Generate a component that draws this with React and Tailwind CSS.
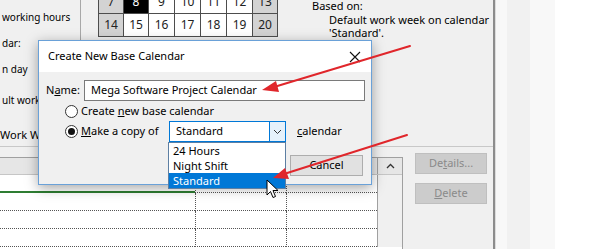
import React from 'react';

const rows = [
  [7, 8, 9, 10, 11, 12, 13],
  [14, 15, 16, 17, 18, 19, 20],
];

const cellClass = (n, i) => {
  if (n === 8) return 'bg-black text-white';
  if (i === 0 || i === 6) return 'bg-[#d3d3d3] text-[#222]';
  return 'bg-white text-[#222]';
};

const Calendar = () => (
  <div className="mt-[-10px] ml-[17px] grid grid-cols-[24px_24px_25px_25px_25px_25px_24px] gap-px bg-[#4d4d4d] border border-[#4d4d4d] h-fit">
    {rows.flat().map((n, idx) => (
      <div key={n} className={`h-[22px] flex items-center justify-center text-[12px] ${cellClass(n, idx % 7)}`}>
        {n}
      </div>
    ))}
  </div>
);

const Arrows = () => (
  <svg className="absolute inset-0 pointer-events-none" width="600" height="249" viewBox="0 0 600 249">
    <g stroke="#e0262b" strokeWidth="2" strokeLinecap="round">
      <line x1="410" y1="46" x2="274" y2="87" />
      <line x1="407" y1="135" x2="284" y2="174" />
    </g>
    <polygon points="262,90 276,81 279,92" fill="#e0262b" />
    <polygon points="273,178 285,168 289,179" fill="#e0262b" />
  </svg>
);

const Cursor = () => (
  <svg className="absolute left-[266px] top-[179px] pointer-events-none" width="14" height="21" viewBox="0 0 14 21">
    <path d="M1 1 L1 16 L4.5 12.5 L7 18.5 L9.5 17.5 L7 11.5 L12 11.5 Z" fill="#fff" stroke="#000" strokeWidth="1" strokeLinejoin="round" />
  </svg>
);

const Dialog = () => (
  <div className="absolute left-[38px] top-[40px] w-[334px] h-[145px] border border-[#6aa1d8] bg-[#f0f0f0] shadow-[0_3px_12px_rgba(0,0,0,0.35)]">
    <div className="h-[31px] bg-white flex items-center justify-between pl-[9px] pr-[10px]">
      <span className="text-[11px] text-black">Create New Base Calendar</span>
      <svg width="12" height="12" viewBox="0 0 12 12">
        <path d="M1 1 L11 11 M11 1 L1 11" stroke="#111" strokeWidth="1.1" />
      </svg>
    </div>

    <div className="flex items-center pl-[7px] mt-[8px]">
      <span className="w-[38px]">N<u>a</u>me:</span>
      <div className="w-[281px] h-[21px] bg-white border border-[#7a7a7a] flex items-center pl-[6px]">
        Mega Software Project Calendar
      </div>
    </div>

    <div className="flex items-center h-[20px] pl-[26px]">
      <span className="w-[13px] h-[13px] rounded-full border border-[#333] bg-white" />
      <span className="ml-[3px]">Create <u>n</u>ew base calendar</span>
    </div>

    <div className="flex items-center h-[21px] pl-[26px]">
      <span className="w-[13px] h-[13px] rounded-full border border-[#333] bg-white flex items-center justify-center">
        <span className="w-[7px] h-[7px] rounded-full bg-[#111]" />
      </span>
      <span className="ml-[3px] w-[88px]"><u>M</u>ake a copy of</span>
      <div className="w-[117px] h-[21px] bg-white border border-[#0078d7] flex items-center justify-between">
        <span className="pl-[6px]">Standard</span>
        <span className="w-[16px] h-full bg-[#e5f1fb] border-l border-[#0078d7] flex items-center justify-center">
          <svg width="9" height="6" viewBox="0 0 9 6">
            <path d="M1 1 L4.5 4.5 L8 1" stroke="#333" strokeWidth="1" fill="none" />
          </svg>
        </span>
      </div>
      <span className="ml-[11px]"><u>c</u>alendar</span>
    </div>

    <div className="flex justify-end pr-[8px] mt-[13px]">
      <div className="w-[73px] h-[21px] bg-[#e1e1e1] border border-[#adadad] flex items-center justify-center">
        Cancel
      </div>
    </div>

    <div className="absolute left-[129px] top-[101px] w-[118px] h-[47px] bg-white border border-[#5d7fa3] leading-[15px]">
      <div className="pl-[4px] h-[15px]">24 Hours</div>
      <div className="pl-[4px] h-[15px]">Night Shift</div>
      <div className="pl-[4px] h-[15px] bg-[#0078d7] text-white">Standard</div>
    </div>
  </div>
);

export default function App() {
  return (
    <div className="relative w-[600px] h-[249px] overflow-hidden bg-[#f0f0f0] text-black text-[11px] font-['Noto_Sans',sans-serif]">
      <div className="flex h-full">
        <div className="w-[493px] flex flex-col">
          <div className="flex h-[125px]">
            <div className="w-[81px] shrink-0 border-r border-[#a8a8a8] text-[10px] leading-[16px] pl-[2px] whitespace-nowrap overflow-hidden">
              <div className="mt-[9px]">working hours</div>
              <div className="mt-[10px]">dar:</div>
              <div className="mt-[10px]">n day</div>
              <div className="mt-[15px]">ult work week</div>
            </div>
            <Calendar />
            <div className="ml-[34px] mt-[-1px] leading-[13.5px] whitespace-nowrap">
              <div>Based on:</div>
              <div className="pl-[17px]">Default work week on calendar</div>
              <div className="pl-[17px]">'Standard'.</div>
            </div>
          </div>

          <div className="h-[22px] flex items-center border-b border-[#c8c8c8] whitespace-nowrap">
            <span>Work Weeks</span>
          </div>

          <div className="flex flex-1 mt-[10px]">
            <div className="w-[403px] flex flex-col bg-white border-t border-r border-[#a0a0a0]">
              <div className="flex h-[17px] bg-[#e6e6e6] border-b border-[#c6c6c6]">
                <div className="w-[378px]" />
                <div className="w-[25px] border-l border-[#a0a0a0] flex justify-center items-center">
                  <svg width="9" height="6" viewBox="0 0 9 6">
                    <path d="M1 5 L4.5 1.5 L8 5" stroke="#333" strokeWidth="1.3" fill="none" />
                  </svg>
                </div>
              </div>
              {[0, 1, 2, 3].map((r) => (
                <div key={r} className="flex h-[18px]">
                  <div className={`w-[195px] border-b ${r === 0 ? 'border-b-2 border-[#2e7d32]' : 'border-dotted border-[#555]'}`} />
                  <div className="w-[92px] border-l border-b border-dotted border-[#555]" />
                  <div className="w-[91px] border-l border-b border-dotted border-[#555]" />
                  <div className="w-[25px] border-l border-[#a0a0a0] bg-[#f0f0f0]" />
                </div>
              ))}
            </div>
            <div className="ml-[12px] flex flex-col gap-[9px] mt-[-4px]">
              <div className="w-[72px] h-[21px] bg-[#cccccc] border border-[#bfbfbf] text-[#8a8a8a] flex items-center justify-center">
                De<u>t</u>ails...
              </div>
              <div className="w-[72px] h-[21px] bg-[#cccccc] border border-[#bfbfbf] text-[#8a8a8a] flex items-center justify-center">
                <u>D</u>elete
              </div>
            </div>
          </div>
        </div>

        <div className="w-[3px] border-l-2 border-[#8c8c8c] bg-[#dcdcdc]" />
        <div className="flex-1 flex">
          <div className="w-[11px] bg-[#f8f8f8]" />
          <div className="w-[23px] bg-[#f1f1f1]" />
          <div className="w-[25px] bg-[#f8f8f8]" />
          <div className="flex-1 bg-white" />
        </div>
      </div>

      <Dialog />
      <Arrows />
      <Cursor />
    </div>
  );
}
